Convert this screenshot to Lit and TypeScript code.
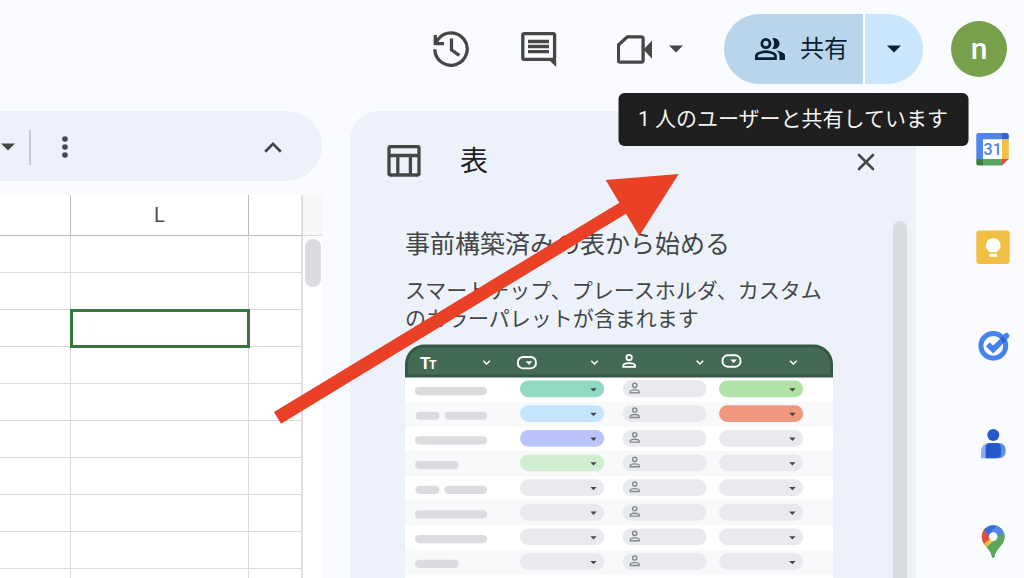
import { LitElement, html, svg, css } from "lit";
import { customElement } from "lit/decorators.js";

const base = css`
  :host,
  * {
    box-sizing: border-box;
  }
  button {
    border: 0;
    margin: 0;
    padding: 0;
    background: none;
    color: inherit;
    font: inherit;
    cursor: pointer;
    display: flex;
    align-items: center;
  }
  svg {
    display: block;
    flex: none;
  }
`;

const caret = html`<svg width="14" height="8" viewBox="0 0 14 8" aria-hidden="true">
  <path d="M0 0.5H14L7 7.5Z" fill="currentColor" />
</svg>`;

@customElement("top-bar")
class TopBar extends LitElement {
  static styles = [
    base,
    css`
      :host {
        display: flex;
        justify-content: flex-end;
        align-items: center;
        padding: 14px 17px 27px;
        color: #444746;
      }
      .actions {
        display: flex;
        align-items: center;
        gap: 52px;
        margin-right: 33px;
      }
      .meet {
        gap: 16px;
        padding: 0 8px;
      }
      .split {
        display: flex;
        gap: 2px;
        height: 70px;
        margin-right: 28px;
        color: #071e36;
        background: linear-gradient(#ffffff, #ffffff) 139px 0 / 2px 100% no-repeat;
      }
      .share-wrap {
        position: relative;
        display: flex;
      }
      .share {
        gap: 15px;
        padding: 0 15px 0 31px;
        font-size: 24px;
        line-height: 28px;
        border-radius: 35px 0 0 35px;
        background: #b9d5eb;
      }
      .more {
        width: 58px;
        justify-content: center;
        border-radius: 0 35px 35px 0;
        background: #c9e6fd;
      }
      .tooltip {
        position: absolute;
        z-index: 3;
        top: 79px;
        left: 50%;
        transform: translateX(-50%);
        padding: 0 21px 0 20px;
        border-radius: 6px;
        background: #1f1f1f;
        color: #f2f2f2;
        font-size: 21px;
        line-height: 53px;
        white-space: nowrap;
      }
      .avatar {
        justify-content: center;
        width: 56px;
        height: 56px;
        border-radius: 50%;
        background: #76a04a;
        color: #ffffff;
        font: 500 30px/56px Roboto, sans-serif;
      }
    `,
  ];

  render() {
    return html`
      <div class="actions">
        <button aria-label="変更履歴">
          <svg width="36" height="36" viewBox="0 0 36 36" fill="none" stroke="currentColor" stroke-width="3.3">
            <path d="M1.8 18.3A16.2 16.2 0 1 0 5 8.4L3 11.5" />
            <path d="M2.3 4V12.6H11" />
            <path d="M18.5 7.5V19L26.3 24.3" />
          </svg>
        </button>
        <button aria-label="コメント">
          <svg width="36" height="36" viewBox="0 0 36 36" fill="none" stroke="currentColor" stroke-width="3.3">
            <rect x="1.8" y="2.6" width="31.8" height="25.8" rx="1.6" />
            <path d="M7 10.5H28M7 15.5H28M7 20.7H28" />
            <path d="M27.5 28.5H35.2V36Z" fill="currentColor" stroke="none" />
          </svg>
        </button>
        <button class="meet" aria-label="会議に参加">
          <svg width="36" height="36" viewBox="0 0 36 36" fill="none" stroke="currentColor" stroke-width="3.3">
            <path d="M10.3 5.9H24.2Q26.1 5.9 26.1 7.8V29.2Q26.1 31.1 24.2 31.1H3.2Q1.4 31.1 1.4 29.2V14Z" />
            <path d="M26.5 18.5L35 9.5V27.8Z" fill="currentColor" stroke="none" />
          </svg>
          ${caret}
        </button>
      </div>
      <div class="split">
        <div class="share-wrap">
          <button class="share" aria-describedby="share-tip">
            <svg width="30" height="22" viewBox="40 -800 880 640" fill="currentColor" aria-hidden="true">
              <path
                d="M40-160v-112q0-34 17.5-62.5T104-378q62-31 126-46.5T360-440q66 0 130 15.5T616-378q29 15 46.5 43.5T680-272v112H40Zm720 0v-120q0-44-24.5-84.5T666-434q51 6 96 20.5t84 35.5q36 20 55 44.5t19 53.5v120H760ZM360-480q-66 0-113-47t-47-113q0-66 47-113t113-47q66 0 113 47t47 113q0 66-47 113t-113 47Zm400-160q0 66-47 113t-113 47q-11 0-28-2.5t-28-5.5q27-32 41.5-71t14.5-81q0-42-14.5-81T544-792q14-5 28-6.5t28-1.5q66 0 113 47t47 113ZM120-240h480v-32q0-11-5.5-20T580-306q-54-27-109-40.5T360-360q-56 0-111 13.5T140-306q-9 5-14.5 14t-5.5 20v32Zm240-320q33 0 56.5-23.5T440-640q0-33-23.5-56.5T360-720q-33 0-56.5 23.5T280-640q0 33 23.5 56.5T360-560Z"
              />
            </svg>
            <span>共有</span>
          </button>
          <div class="tooltip" id="share-tip" role="tooltip">1 人のユーザーと共有しています</div>
        </div>
        <button class="more" aria-label="共有オプション">${caret}</button>
      </div>
      <button class="avatar" aria-label="アカウント">n</button>
    `;
  }
}

@customElement("sheet-area")
class SheetArea extends LitElement {
  static styles = [
    base,
    css`
      :host {
        display: flex;
        flex-direction: column;
        min-width: 0;
        color: #444746;
      }
      .toolbar {
        display: flex;
        align-items: center;
        flex: none;
        height: 70px;
        padding: 2px 40px 0 1px;
        border-radius: 0 35px 35px 0;
        background: #edf2fa;
      }
      .divider {
        width: 2px;
        height: 35px;
        margin: 0 31px 0 14px;
        background: #c7cacc;
      }
      .collapse {
        margin-left: auto;
      }
      .sheet {
        display: flex;
        flex: 1;
        min-height: 0;
        margin-top: 14px;
        overflow: hidden;
        background: #ffffff;
      }
      table {
        flex: 1;
        align-self: flex-start;
        table-layout: fixed;
        border-collapse: separate;
        border-spacing: 0;
      }
      .wide {
        width: 178px;
      }
      .edge {
        width: 54px;
      }
      th,
      td {
        padding: 0;
        height: 37px;
        border-right: 1px solid #d9d9d9;
        border-bottom: 1px solid #d9d9d9;
      }
      th {
        height: 41px;
        border-color: #bcbcbc;
        color: #4c4f4f;
        font: 400 20px/40px Roboto, sans-serif;
      }
      tr > :last-child {
        border-right: 2px solid #e0e0e0;
      }
      td.selected {
        outline: 3px solid #37753d;
        outline-offset: -2px;
      }
      .track {
        width: 19px;
      }
      .corner {
        height: 41px;
        border-bottom: 1px solid #dedede;
        background: #f7f7f7;
      }
      .thumb {
        width: 16px;
        height: 48px;
        margin: 3px auto 0;
        border-radius: 8px;
        background: #dadce0;
      }
    `,
  ];

  render() {
    const rows = Array.from({ length: 10 }, (_, i) => i);
    return html`
      <div class="toolbar" role="toolbar">
        <button aria-label="オプション">${caret}</button>
        <span class="divider"></span>
        <button aria-label="その他">
          <svg width="6" height="24" viewBox="0 0 6 24" fill="currentColor">
            <circle cx="3" cy="4" r="2.8" />
            <circle cx="3" cy="12" r="2.8" />
            <circle cx="3" cy="20" r="2.8" />
          </svg>
        </button>
        <button class="collapse" aria-label="メニューを非表示">
          <svg width="18" height="12" viewBox="0 0 18 12" fill="none" stroke="currentColor" stroke-width="2.7">
            <path d="M1.2 10.7L9 2.8L16.8 10.7" />
          </svg>
        </button>
      </div>
      <div class="sheet">
        <table>
          <colgroup>
            <col />
            <col class="wide" />
            <col class="edge" />
          </colgroup>
          <thead>
            <tr>
              <th></th>
              <th scope="col">L</th>
              <th></th>
            </tr>
          </thead>
          <tbody>
            ${rows.map(
              (i) => html`<tr>
                <td></td>
                <td class=${i === 2 ? "selected" : ""}></td>
                <td></td>
              </tr>`
            )}
          </tbody>
        </table>
        <div class="track">
          <div class="corner"></div>
          <div class="thumb"></div>
        </div>
      </div>
    `;
  }
}

type Row = { bar: "full" | "split" | "short"; chip: string; status: string };

const GREY = "#e8eaed";
const ROWS: Row[] = [
  { bar: "full", chip: "#92dabf", status: "#b0e2a7" },
  { bar: "split", chip: "#c6e4fd", status: "#f1967f" },
  { bar: "full", chip: "#b9c4fa", status: GREY },
  { bar: "short", chip: "#d0efd1", status: GREY },
  { bar: "split", chip: GREY, status: GREY },
  { bar: "full", chip: GREY, status: GREY },
  { bar: "full", chip: GREY, status: GREY },
  { bar: "short", chip: GREY, status: GREY },
  { bar: "full", chip: GREY, status: GREY },
];
const BARS = {
  full: [[10, 72]],
  split: [
    [10.5, 24],
    [39.5, 42.5],
  ],
  short: [[10, 43.5]],
};

@customElement("table-preview")
class TablePreview extends LitElement {
  static styles = css`
    :host {
      display: block;
    }
    svg {
      display: block;
      width: 100%;
    }
    .type {
      font-family: Roboto, sans-serif;
      font-weight: 700;
      fill: #ffffff;
    }
  `;

  row(row: Row, i: number) {
    const arrow = (x: number) => svg`<path d="M${x} 11h6.4l-3.2 3.4z" fill="#444746" />`;
    return svg`<g transform="translate(0 ${33.2 + i * 24.67})">
      <rect width="428" height="24.8" fill=${i % 2 ? "#f8f9fb" : "#ffffff"} />
      ${BARS[row.bar].map(([x, w]) => svg`<rect x=${x} y="9.8" width=${w} height="8.2" rx="4.1" fill="#dadce0" />`)}
      <rect x="115" y="3.4" width="84.2" height="16.7" rx="8.35" fill=${row.chip} />
      <rect x="217.6" y="3.4" width="84" height="16.7" rx="8.35" fill=${GREY} />
      <rect x="314" y="3.4" width="84.2" height="16.7" rx="8.35" fill=${row.status} />
      ${arrow(185.3)}${arrow(384.2)}
      <g fill="none" stroke="#85898d" stroke-width="1.4">
        <circle cx="229.7" cy="8.2" r="2.1" />
        <path d="M225.2 15.6V14.8C225.2 12 234.2 12 234.2 14.8V15.6Z" />
      </g>
    </g>`;
  }

  render() {
    const chevron = (x: number) => svg`<path d="M${x} 16.7l3.3 3.3 3.3-3.3" />`;
    const chip = (x: number, y: number) => svg`<rect x=${x} y=${y} width="18" height="11.4" rx="5.2" stroke-width="1.9" />
      <path d="M${x + 7.8} ${y + 4.2}h6.6l-3.3 3.8z" fill="#ffffff" stroke="none" />`;
    return html`<svg viewBox="0 0 428 255" role="img" aria-label="表のプレビュー">
      ${ROWS.map((r, i) => this.row(r, i))}
      <path d="M0 33.5V20A19.5 19.5 0 0 1 19.5 0.5H408.5A19.5 19.5 0 0 1 428 20V33.5Z" fill="#365746" />
      <path d="M3 30.5V20A16.5 16.5 0 0 1 19.5 3.5H408.5A16.5 16.5 0 0 1 425 20V30.5Z" fill="#446a56" />
      <text class="type" x="15" y="24.7" font-size="17">T</text>
      <text class="type" x="24" y="24.7" font-size="12">T</text>
      <g fill="none" stroke="#ffffff" stroke-width="1.4">
        ${chevron(78.3)}${chevron(186.2)}${chevron(291.6)}${chevron(385)}
        ${chip(112.9, 13)}${chip(317.5, 11.3)}
        <g stroke-width="1.9">
          <circle cx="224.1" cy="13.6" r="2.7" />
          <path d="M218.2 22.9V21.9C218.2 18.2 230 18.2 230 21.9V22.9Z" />
        </g>
      </g>
    </svg>`;
  }
}

@customElement("tables-panel")
class TablesPanel extends LitElement {
  static styles = [
    base,
    css`
      :host {
        position: relative;
        display: flex;
        flex-direction: column;
        border-radius: 28px 28px 0 0;
        background: #edf2fa;
        color: #444746;
      }
      h2,
      h3,
      p {
        margin: 0;
        font-weight: 400;
      }
      header {
        display: flex;
        align-items: center;
        flex: none;
        gap: 39px;
        height: 100px;
        padding: 2px 41px 0 37px;
      }
      h2 {
        flex: 1;
        color: #1f1f1f;
        font-size: 28px;
        line-height: 40px;
      }
      .body {
        display: flex;
        flex: 1;
        min-height: 0;
        gap: 60px;
        padding: 10px 9px 0 55px;
        overflow: hidden;
      }
      .content {
        flex: 1;
        min-width: 0;
      }
      h3 {
        font-size: 25px;
        line-height: 48px;
      }
      p {
        margin: 8px 0 11px;
        font-size: 21px;
        line-height: 28px;
      }
      .thumb {
        width: 14px;
        border-radius: 7px 7px 0 0;
        background: #dadce0;
      }
      .pointer {
        position: absolute;
        z-index: 2;
        top: 59px;
        left: -80px;
      }
    `,
  ];

  render() {
    return html`
      <header>
        <svg width="34" height="34" viewBox="0 0 34 34" fill="none" stroke="currentColor" stroke-width="3.3" aria-hidden="true">
          <rect x="2" y="1.5" width="30" height="28.5" rx="1.5" />
          <path d="M2 10.5H32M10.8 10.5V30M23.4 10.5V30" />
        </svg>
        <h2>表</h2>
        <button aria-label="閉じる">
          <svg width="18" height="18" viewBox="0 0 18 18" fill="none" stroke="currentColor" stroke-width="2.6" stroke-linecap="round">
            <path d="M2 2L16 16M16 2L2 16" />
          </svg>
        </button>
      </header>
      <div class="body">
        <div class="content">
          <h3>事前構築済みの表から始める</h3>
          <p>スマートチップ、プレースホルダ、カスタムのカラーパレットが含まれます</p>
          <table-preview></table-preview>
        </div>
        <div class="thumb"></div>
      </div>
      <svg class="pointer" width="412" height="258" viewBox="270 170 412 258" aria-hidden="true">
        <path d="M274 412L619.3 202.7L605.7 180L678.7 174L639.3 236L626 213.7L281 423.8Z" fill="#ea4126" />
      </svg>
    `;
  }
}

@customElement("side-rail")
class SideRail extends LitElement {
  static styles = [
    base,
    css`
      :host {
        display: flex;
        flex-direction: column;
        align-items: flex-end;
        gap: 64px;
        width: 108px;
        padding: 21px 14px 0 0;
      }
      .day {
        font: 500 16px Roboto, sans-serif;
        fill: #4a7fec;
      }
    `,
  ];

  render() {
    return html`
      <button aria-label="カレンダー">
        <svg width="34" height="34" viewBox="0 0 34 34">
          <path d="M0.3 27V3.2Q0.3 1 2.5 1H26V7.5H7V27Z" fill="#5084ee" />
          <path d="M26 1H30.6Q32.8 1 32.8 3.2V7.5H26Z" fill="#3065cb" />
          <path d="M26 7.5H32.8V27H26Z" fill="#f2c043" />
          <path d="M7 27H26V33.5H7Z" fill="#59a75c" />
          <path d="M0.3 27H7V33.5H2.5Q0.3 33.5 0.3 31.3Z" fill="#3b8043" />
          <path d="M26 27H32.8L26 33.5Z" fill="#d9523f" />
          <path d="M7 7.5H26V27H7Z" fill="#ffffff" />
          <text class="day" x="16.7" y="23" text-anchor="middle">31</text>
        </svg>
      </button>
      <button aria-label="Keep">
        <svg width="34" height="34" viewBox="0 0 34 34">
          <rect x="0.3" y="0.5" width="33.4" height="33.4" rx="3" fill="#f1bf42" />
          <path d="M17.2 8.2A7.2 7.2 0 0 1 21 21.6V22.2H13.4V21.6A7.2 7.2 0 0 1 17.2 8.2Z" fill="#ffffff" />
          <rect x="13.4" y="23.8" width="7.6" height="3" fill="#ffffff" />
        </svg>
      </button>
      <button aria-label="ToDo リスト">
        <svg width="34" height="34" viewBox="0 0 34 34" fill="none">
          <circle cx="17.3" cy="17.8" r="12.4" fill="#ffffff" stroke="#4583f1" stroke-width="5" />
          <path d="M11.8 16.2L17.2 21.6L29 9.8" stroke="#4583f1" stroke-width="5.6" />
          <path d="M28.6 5.5L31 4.6L33.6 7.2L32.6 10L28.6 13L25 9.3Z" fill="#4583f1" />
          <path d="M23.9 10.4L26.4 8L30.3 12.4L27.4 15.6Z" fill="#2c63d2" />
        </svg>
      </button>
      <button aria-label="連絡先">
        <svg width="34" height="34" viewBox="0 0 34 34">
          <circle cx="17.3" cy="9" r="6" fill="#2659c8" />
          <path d="M5 32.2V26Q5 17 14 17H18V32.2Z" fill="#8cabf8" />
          <path d="M17 17H22.5Q29.7 17 29.7 24.5T22.5 32.2H17Z" fill="#5a8af4" />
          <path d="M9.6 32.2V22Q9.6 17 14.6 17H19.8Q25 17 25 22.2V27Q25 32.2 19.8 32.2Z" fill="#2659c8" />
        </svg>
      </button>
      <button aria-label="マップ">
        <svg width="34" height="34" viewBox="0 0 34 34">
          <clipPath id="pin">
            <path d="M17.2 1.2A11.4 11.4 0 0 1 28.6 12.6C28.6 21.5 20 23.8 18.4 32.8Q17.2 35.2 16 32.8C14.4 23.8 5.8 21.5 5.8 12.6A11.4 11.4 0 0 1 17.2 1.2Z" />
          </clipPath>
          <g clip-path="url(#pin)">
            <path d="M0 0H34V34H0Z" fill="#59a75c" />
            <path d="M17.2 12.6L8.3 23L0 18V10Z" fill="#f2c043" />
            <path d="M8.3 23L20 9L23 12L11 27.5Z" fill="#f2c043" />
            <path d="M0 0L8.6 5.2L17.2 12.6L7.5 20.2L0 20Z" fill="#d9523f" />
            <path d="M8.4 5.2L5 0H22L20.6 1.8L12.5 12Z" fill="#3a6fdb" />
            <path d="M20.8 1.6L34 0V8L27.6 8.2L18 18L13.5 10.3Z" fill="#5486ee" />
            <path d="M27.8 8L34 8V34H11L9.5 24Z" fill="#59a75c" />
          </g>
          <circle cx="17.2" cy="12.6" r="4.3" fill="#ffffff" />
        </svg>
      </button>
    `;
  }
}

@customElement("app-root")
class AppRoot extends LitElement {
  static styles = css`
    :host {
      display: flex;
      flex-direction: column;
      height: 100vh;
      overflow: hidden;
      background: #fafbfe;
      font-family: Roboto, "Noto Sans CJK JP", sans-serif;
    }
    top-bar {
      flex: none;
    }
    main {
      display: flex;
      flex: 1;
      min-height: 0;
    }
    sheet-area {
      flex: 1;
      margin-right: 28px;
    }
    tables-panel {
      flex: 0 0 566px;
    }
    side-rail {
      flex: none;
    }
  `;

  render() {
    return html`
      <top-bar></top-bar>
      <main>
        <sheet-area></sheet-area>
        <tables-panel></tables-panel>
        <side-rail></side-rail>
      </main>
    `;
  }
}
